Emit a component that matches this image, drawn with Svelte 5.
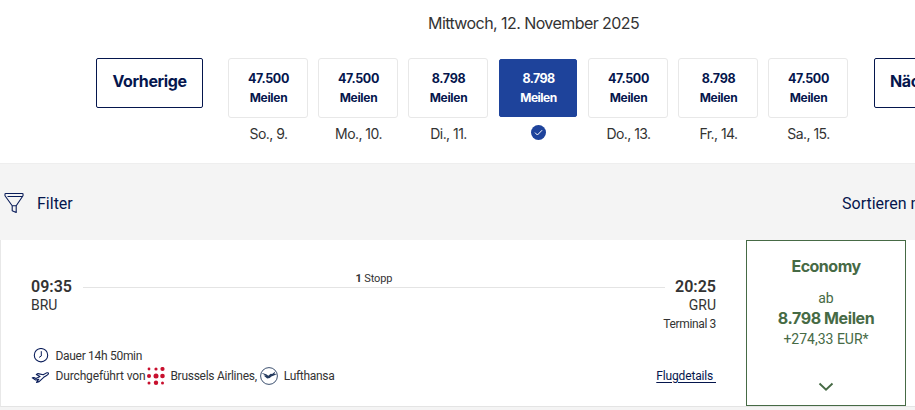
<script>
  let selected = $state(3);

  const days = [
    { miles: "47.500", label: "So., 9." },
    { miles: "47.500", label: "Mo., 10." },
    { miles: "8.798", label: "Di., 11." },
    { miles: "8.798", label: "Mi., 12." },
    { miles: "47.500", label: "Do., 13." },
    { miles: "8.798", label: "Fr., 14." },
    { miles: "47.500", label: "Sa., 15." },
  ];

  // Brussels Airlines dots: x, y, radius
  const dots = [
    [2, 2, 1.4], [9, 2, 1.6], [15.5, 2, 2.1],
    [2, 9, 2], [9, 9, 2.5], [15.5, 9, 2.3],
    [2, 16, 1.5], [9, 15.8, 2.2], [15.5, 16, 1.5],
  ];
</script>

<div class="page">
  <section class="calendar">
    <h2>Mittwoch, 12. November 2025</h2>
    <div class="strip">
      <button class="nav prev">Vorherige</button>
      <div class="days">
        {#each days as day, i}
          <div class="day">
            <button class="price" class:selected={i === selected} onclick={() => (selected = i)}>
              <span>{day.miles}</span>
              <span class="unit">Meilen</span>
            </button>
            {#if i === selected}
              <svg class="check" width="15" height="15" viewBox="0 0 15 15">
                <circle cx="7.5" cy="7.5" r="7.5" fill="#1e439b" />
                <path d="M4 7.6l2.4 2.4 4.7-4.8" fill="none" stroke="#fff" stroke-width="1" />
              </svg>
            {:else}
              <span class="label">{day.label}</span>
            {/if}
          </div>
        {/each}
      </div>
      <button class="nav next">Nächste</button>
    </div>
  </section>

  <section class="toolbar">
    <div class="filter">
      <svg width="20" height="22" viewBox="0 0 20 22" fill="none" stroke="#0a1d5a" stroke-width="1.1">
        <path d="M1.6 1.500h16.800q.9 0 .6 1v1.200L12.200 13.700v6.800l-4-1.700v-5.100L1 3.700V2.500q-.2-1 .6-1z" stroke-linejoin="round" />
        <path d="M3.500 4.500h15M8.200 13.700h4" />
      </svg>
      <span>Filter</span>
    </div>
    <span class="sort">Sortieren nach</span>
  </section>

  <section class="result">
    <div class="flight">
      <div class="route">
        <div class="stop">
          <strong>09:35</strong>
          <span class="code">BRU</span>
        </div>
        <div class="line"><span><b>1</b> Stopp</span></div>
        <div class="stop arrival">
          <strong>20:25</strong>
          <span class="code">GRU</span>
          <span class="terminal">Terminal 3</span>
        </div>
      </div>
      <div class="info">
        <div class="row">
          <svg class="lead" width="18" height="16" viewBox="0 0 18 16" fill="none" stroke="#0a1d5a">
            <circle cx="10" cy="7.200" r="6.700" stroke-width="1.100" />
            <path d="M10.300 3.200v4.800l-2.200 1.400" stroke-width="1" />
          </svg>
          <span class="duration">Dauer 14h 50min</span>
        </div>
        <div class="row operators">
          <svg class="lead" width="18" height="16" viewBox="0 0 18 16" fill="none" stroke="#0a1d5a" stroke-width="1.1" stroke-linejoin="round">
            <path d="M1.300 9.900l1.600-.4 2.100 1 4-2-3.700-2 1.700-.9 5.200 1.200 2.900-1.700c1.200-.6 2.400-.3 2.400.4 0 .8-.7 1.200-1.500 1.700l-3.300 2.100-4.600 4.300-2.600.8 2.300-3.200-3.200.8z" />
          </svg>
          <span class="operated">Durchgeführt von</span>
          <svg class="brussels" width="18" height="18" viewBox="0 0 18 18" fill="#c8102e">
            {#each dots as [x, y, r]}
              <circle cx={x} cy={y} {r} />
            {/each}
          </svg>
          <span class="airline">Brussels Airlines,</span>
          <svg class="crane" width="18" height="18" viewBox="0 0 18 18">
            <circle cx="9" cy="9" r="8.400" fill="none" stroke="#263c5f" stroke-width=".9" />
            <path d="M1.200 5.800l5 1.500 2.100 1.400 2.400-1.900 1.400.1 3.500-2.600-1.300 2.400 2.600.2-3 1.500-2.500 1.200-1.700 1.300-2.500.5-3.600-3 2.200.4z" fill="#263c5f" />
          </svg>
          <span class="lufthansa">Lufthansa</span>
          <a href="#details" class="details">Flugdetails&nbsp;</a>
        </div>
      </div>
    </div>
    <button class="fare">
      <span class="cabin">Economy</span>
      <span class="from">ab</span>
      <span class="miles">8.798 Meilen</span>
      <span class="tax">+274,33 EUR*</span>
      <svg width="16" height="10" viewBox="0 0 16 10">
        <path d="M1.500 1.500L8 7.700l6.500-6.200" fill="none" stroke="#466a45" stroke-width="1.900" />
      </svg>
    </button>
  </section>
</div>

<style>
  :global(body) {
    background: #f4f4f4;
    overflow: hidden;
  }

  .page {
    width: 915px;
    height: 410px;
    overflow: hidden;
    font-family: Roboto, "Liberation Sans", sans-serif;
    color: #333;
  }

  button {
    box-sizing: border-box;
    padding: 0;
    background: #fff;
    font-family: Inter, sans-serif;
    color: #05164d;
    cursor: pointer;
  }

  .calendar {
    box-sizing: border-box;
    height: 163px;
    padding-top: 13px;
    background: #fff;
  }

  h2 {
    margin: 0 0 25px;
    padding-left: 428px;
    font: 400 16px/20px Inter, sans-serif;
    letter-spacing: -0.57px;
    white-space: nowrap;
  }

  .strip {
    display: flex;
    align-items: flex-start;
    padding-left: 96px;
  }

  .nav {
    flex: none;
    width: 107px;
    height: 50px;
    padding-bottom: 4px;
    border: 1px solid #05164d;
    border-radius: 2px;
    font-size: 16px;
    font-weight: 700;
    letter-spacing: -0.4px;
  }

  .next {
    padding-left: 15px;
    text-align: left;
  }

  .days {
    display: flex;
    gap: 10px;
    margin: 0 26px 0 25px;
  }

  .day {
    display: flex;
    flex-direction: column;
    align-items: center;
    width: 80px;
  }

  .price {
    display: flex;
    flex-direction: column;
    align-items: center;
    width: 80px;
    height: 60px;
    padding: 10px 0 0 1px;
    border: 1px solid #e8e8e8;
    border-radius: 3px;
    font-size: 12.500px;
    font-weight: 700;
    line-height: 19px;
    letter-spacing: -0.35px;
  }

  .unit {
    font-size: 12px;
    line-height: 20px;
    letter-spacing: -0.3px;
  }

  .price.selected {
    width: 78px;
    height: 58px;
    margin: 1px 0;
    padding-top: 9px;
    border-color: #1e439b;
    border-radius: 2px;
    background: #1e439b;
    color: #fff;
    letter-spacing: -0.6px;
  }

  .selected .unit {
    letter-spacing: -0.5px;
  }

  .label {
    margin-top: 7px;
    padding-left: 1px;
    font: 400 14px/18px Inter, sans-serif;
    letter-spacing: -0.55px;
    white-space: nowrap;
  }

  .check {
    margin-top: 7px;
  }

  .toolbar {
    display: flex;
    align-items: center;
    height: 77px;
    padding-top: 2px;
    box-sizing: border-box;
    font-size: 16px;
    color: #05164d;
    border-top: 1px solid #eee;
  }

  .filter {
    flex: none;
    display: flex;
    align-items: center;
    gap: 13px;
    width: 838px;
    padding-left: 4px;
    box-sizing: border-box;
  }

  .sort {
    margin-left: 4px;
    white-space: nowrap;
  }

  .result {
    display: flex;
    height: 167px;
    box-sizing: border-box;
    background: #fff;
    border-left: 1px solid #e8e8e8;
    border-bottom: 1px solid #e4e4e4;
  }

  .flight {
    width: 745px;
    padding: 37px 30px 0;
    box-sizing: border-box;
  }

  .route {
    display: flex;
    height: 68px;
  }

  .stop {
    display: flex;
    flex-direction: column;
  }

  .stop strong {
    font-size: 16px;
    font-weight: 600;
    line-height: 19px;
  }

  .code {
    font-size: 14px;
    line-height: 19px;
  }

  .terminal {
    font-size: 12px;
    line-height: 18px;
    letter-spacing: -0.35px;
    white-space: nowrap;
  }

  .arrival {
    align-items: flex-end;
    width: 52px;
  }

  .line {
    flex: 1;
    height: 10px;
    margin: 0 -1px 0 11px;
    border-bottom: 1px solid #e4e4e4;
    text-align: center;
    font-size: 11px;
    letter-spacing: -0.1px;
  }

  .line span {
    display: block;
    margin-top: -5px;
    line-height: 13px;
  }

  .row {
    display: flex;
    align-items: center;
    height: 21px;
    font-size: 12px;
    letter-spacing: -0.3px;
    white-space: nowrap;
  }

  .operators {
    margin-top: -1px;
  }

  .lead {
    margin-right: 6.500px;
  }

  .operated {
    letter-spacing: -0.15px;
  }

  .brussels {
    margin: 0 5px 0 2px;
  }

  .airline {
    letter-spacing: -0.27px;
  }

  .crane {
    margin: 0 6px 0 3px;
  }

  .details {
    margin-left: auto;
    color: #05164d;
    letter-spacing: -0.15px;
    text-underline-offset: 2px;
  }

  .fare {
    display: flex;
    flex-direction: column;
    align-items: center;
    width: 160px;
    height: 166px;
    padding-top: 15px;
    border: 1px solid #466a45;
    color: #466a45;
  }

  .cabin {
    font-size: 16px;
    font-weight: 700;
    line-height: 20px;
    letter-spacing: -0.5px;
  }

  .from {
    margin-top: 12px;
    font: 400 14px/20px Roboto, sans-serif;
  }

  .miles {
    font-size: 16px;
    font-weight: 700;
    line-height: 20px;
    letter-spacing: -0.4px;
  }

  .tax {
    font: 400 14px/22px Roboto, sans-serif;
  }

  .fare svg {
    margin-top: 32px;
  }
</style>
